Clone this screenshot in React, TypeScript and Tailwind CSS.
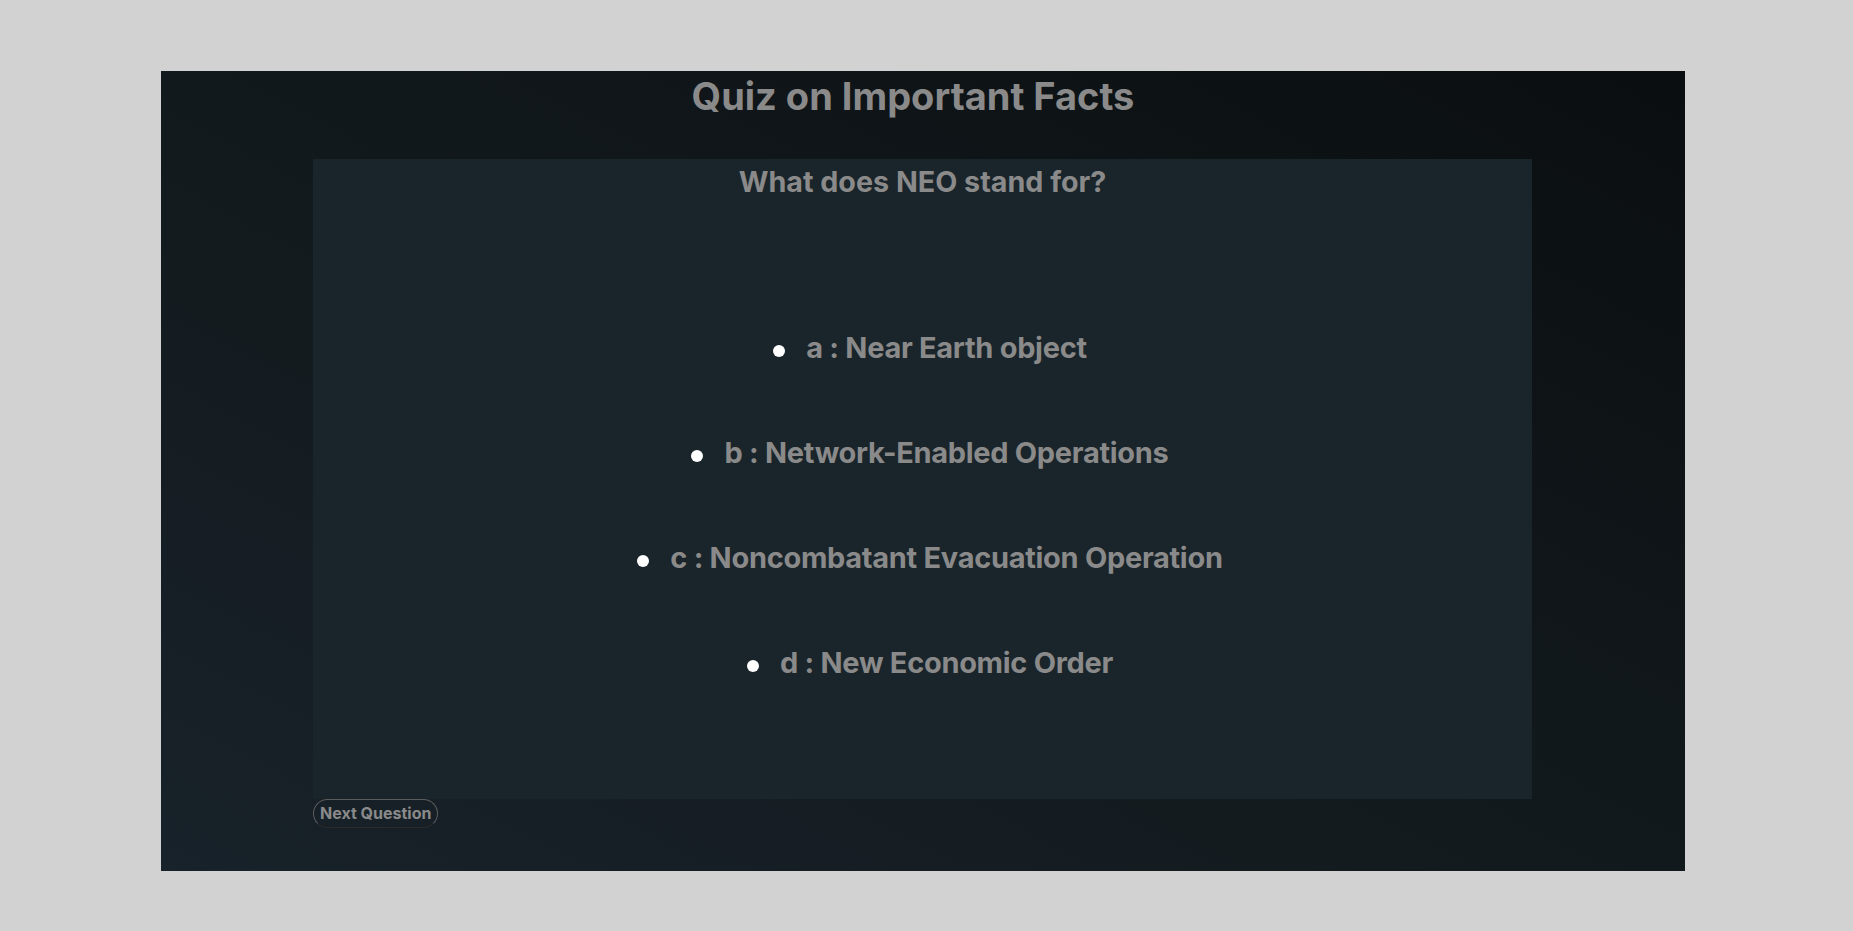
const options = [
  { key: "a", text: "Near Earth object" },
  { key: "b", text: "Network-Enabled Operations" },
  { key: "c", text: "Noncombatant Evacuation Operation" },
  { key: "d", text: "New Economic Order" },
];

export default function App() {
  return (
    <div className="min-h-[931px] w-full bg-[#d2d2d2] pt-[71px] font-['Inter',sans-serif]">
      <div className="ml-[161px] flex h-[800px] w-[1524px] flex-col bg-gradient-to-tr from-[#18222a] via-[#12191c] to-[#0a0e11]">
        {/* title */}
        <h1 className="pr-[20px] pt-[3px] text-center text-[38px] font-bold leading-[1.21] text-[#8a8a8a]">
          Quiz on Important Facts
        </h1>

        <div className="ml-[152px] mt-[39px] flex h-[640px] w-[1219px] flex-col bg-[#1a252b]">
          <h2 className="pt-[6px] text-center text-[28.7px] font-bold leading-[1.21] text-[#8a8a8a]">
            What does NEO stand for?
          </h2>

          <ul className="mt-[130px] flex flex-col gap-[70px] pl-[15px]">
            {options.map((o) => (
              <li key={o.key} className="flex items-center justify-center gap-[21px]">
                <span className="mt-[7px] h-[12px] w-[12px] rounded-full bg-white" />
                <span className="text-[29px] font-bold leading-[1.21] tracking-[-0.3px] text-[#8a8a8a]">
                  {o.key} : {o.text}
                </span>
              </li>
            ))}
          </ul>
        </div>

        <div className="ml-[152px]">
          <button className="h-[29px] rounded-full border border-[#5c5c5c] border-b-[#2a2a2a] px-[6px] text-[16px] font-bold leading-none text-[#8a8a8a]">
            Next Question
          </button>
        </div>
      </div>
    </div>
  );
}
